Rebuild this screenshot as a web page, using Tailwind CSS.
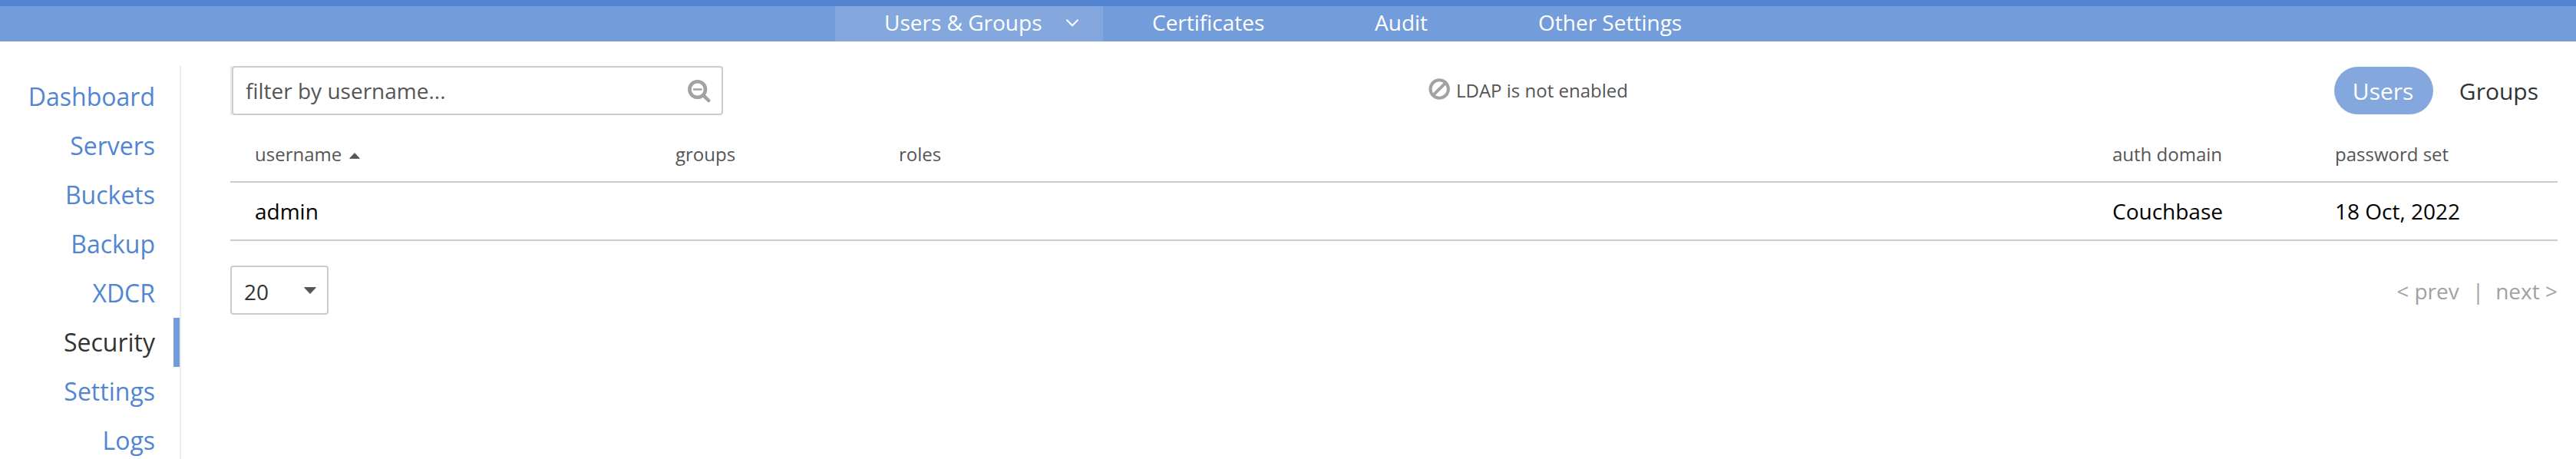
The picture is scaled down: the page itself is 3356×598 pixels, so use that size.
<!DOCTYPE html>
<html lang="en">
<head>
<meta charset="utf-8">
<title>Users &amp; Groups</title>
<script src="https://cdn.jsdelivr.net/npm/@tailwindcss/browser@4"></script>
</head>
<body class="h-[598px] overflow-hidden bg-white font-['Open_Sans',sans-serif] text-[28px] text-[#333333]">
  <header class="h-[54px] border-t-8 border-[#5285d2] bg-[#739cdb]">
    <nav class="flex h-[46px] pl-[1088px] text-white whitespace-nowrap">
      <a class="flex w-[349px] bg-[#84a8de] pl-16 leading-[42px]">Users &amp; Groups
        <svg class="mt-[16px] ml-[30px] h-3 w-[18px]" viewBox="0 0 18 12" fill="none" stroke="currentColor" stroke-width="2.200"><path d="M1.500 1.800 9 9.300 16.500 1.800"/></svg>
      </a>
      <a class="w-[290px] pl-16 leading-[42px]">Certificates</a>
      <a class="w-[213px] pl-16 leading-[42px]">Audit</a>
      <a class="pl-16 leading-[42px]">Other Settings</a>
    </nav>
  </header>

  <div class="flex pt-8">
    <aside class="h-[512px] w-[236px] shrink-0 border-r-2 border-[#ebebeb] pt-2 text-right text-[32px] leading-[64px] text-[#5285d2]">
      <a class="block h-16 pr-8">Dashboard</a>
      <a class="block h-16 pr-8">Servers</a>
      <a class="block h-16 pr-8">Buckets</a>
      <a class="block h-16 pr-8">Backup</a>
      <a class="block h-16 pr-8">XDCR</a>
      <a class="block h-16 border-r-8 border-[#739cdb] pr-6 text-[#333333]">Security</a>
      <a class="block h-16 pr-8">Settings</a>
      <a class="block h-16 pr-8">Logs</a>
    </aside>

    <main class="ml-16 w-[3032px]">
      <div class="flex h-16 items-center">
        <div class="h-16 w-[642px] border-l-2 border-[#ebebeb]">
          <div class="flex h-16 items-center justify-between rounded-[4px] border-2 border-[#cccccc] pr-[13px] pl-4 leading-[60px] text-[#555555]">
            filter by username...
            <svg class="h-8 w-8" viewBox="0 0 32 32" fill="none" stroke="#a2a2a2" stroke-linecap="round"><circle cx="13.700" cy="14.500" r="10.300" stroke-width="4.600"/><path d="M21.500 22.300 28.200 29" stroke-width="4.500"/><path d="M9 14.500h9.500" stroke-width="2.600"/></svg>
          </div>
        </div>
        <div class="ml-[919px] flex items-center gap-2 text-2xl leading-[64px] text-[#555555]">
          <svg class="mb-1 h-7 w-7" viewBox="0 0 28 28" fill="none" stroke="#a2a2a2" stroke-width="4"><circle cx="14.200" cy="14" r="11.700"/><path d="M22.400 5.800 6 22.200"/></svg>
          LDAP is not enabled
        </div>
        <div class="ml-auto flex pr-[25px] pb-px text-[30px] leading-[63px]">
          <span class="h-[62px] w-[129px] rounded-full bg-[#84a8de] pl-6 text-white">Users</span>
          <span class="h-[62px] pl-[34px]">Groups</span>
        </div>
      </div>

      <div class="grid h-[88px] grid-cols-[548px_291px_1581px_290px_1fr] border-b-2 border-[#cccccc] pt-[33px] pl-8 text-2xl leading-9 text-[#555555]">
        <div class="flex">username
          <svg class="mt-4 ml-[10px] h-2 w-[14px]" viewBox="0 0 14 8" fill="#555555" stroke="#555555" stroke-linejoin="round"><path d="M7 .6 13.300 7.300H.7z"/></svg>
        </div>
        <div>groups</div>
        <div>roles</div>
        <div>auth domain</div>
        <div>password set</div>
      </div>
      <div class="grid h-[76px] grid-cols-[548px_291px_1581px_290px_1fr] border-b-2 border-[#cccccc] pl-8 leading-[74px] text-black">
        <div>admin</div>
        <div></div>
        <div></div>
        <div>Couchbase</div>
        <div>18 Oct, 2022</div>
      </div>

      <div class="mt-8 flex justify-between">
        <div class="flex h-16 w-32 justify-between rounded-[4px] border-2 border-[#cccccc] pr-[14px] pl-4 leading-[64px]">20
          <svg class="mt-[26px] h-[10px] w-4" viewBox="0 0 16 10" fill="#555555" stroke="#555555" stroke-linejoin="round"><path d="M.6.6h14.800L8 8.500z"/></svg>
        </div>
        <div class="flex leading-[66px] text-[#a2a2a2]">
          <span>&lt; prev</span><span class="pr-[15px] pl-[17px]">|</span><span>next &gt;</span>
        </div>
      </div>
    </main>
  </div>
</body>
</html>
